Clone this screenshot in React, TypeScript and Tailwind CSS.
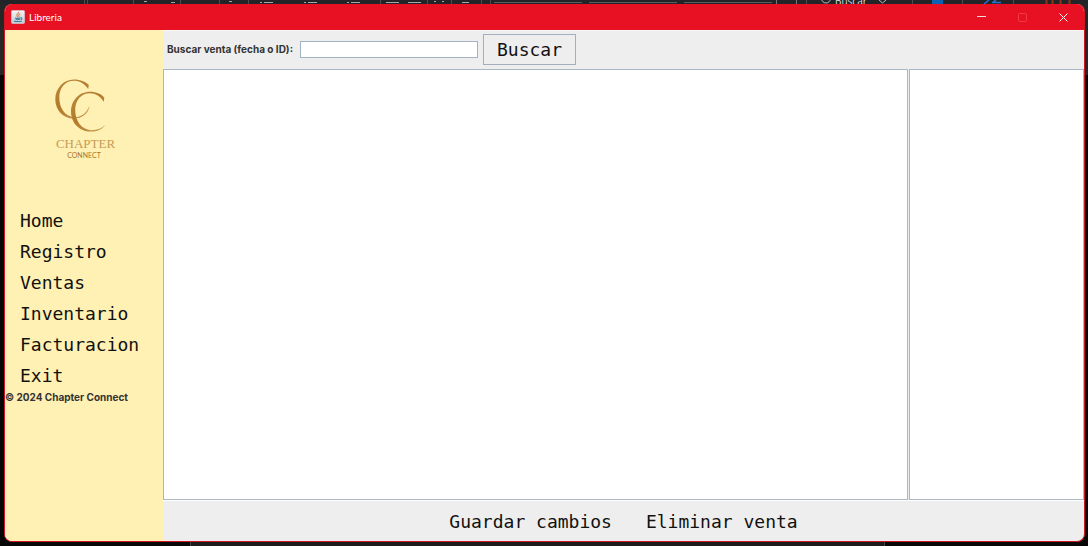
import React from "react";

const links = ["Home", "Registro", "Ventas", "Inventario", "Facturacion", "Exit"];
const mono = "font-['DejaVu_Sans_Mono',monospace] text-[18px] leading-[31px] text-[#111]";

function JavaIcon() {
  return (
    <svg viewBox="0 0 14 14" className="h-[14px] w-[14px]" aria-hidden="true">
      <defs>
        <linearGradient id="tile" x1="0" y1="0" x2="0" y2="1">
          <stop offset="0" stopColor="#f4f5f6" />
          <stop offset="1" stopColor="#b9cbd4" />
        </linearGradient>
      </defs>
      <rect x=".5" y=".5" width="13" height="13" rx="1" fill="url(#tile)" stroke="#d3c9cc" strokeWidth=".7" />
      <path d="M7.6 1.8C8.2 3.300 5.200 4 5.800 5.600c.3.7.9 1 .9 1.600M9.400 3.800c-1.800.7-2.200 1.500-1.400 2.300.4.5.1.9-.4 1.200" fill="none" stroke="#d98a61" strokeWidth="1.2" />
      <path d="M4 7.900c1 .6 4.200.6 5.600 0M4.600 9.300c1 .4 3.200.4 4.300 0M3 10.900c1.800.8 6 .8 7.800 0M9.700 7.800c1.800-.2 1.500 1.400 0 1.800" fill="none" stroke="#44799a" strokeWidth="1.1" />
    </svg>
  );
}

function Logo() {
  return (
    <svg viewBox="0 0 60 80" className="h-[80px] w-[60px] overflow-visible" role="img" aria-label="Chapter Connect">
      <defs>
        <linearGradient id="gold" x1="0" y1="0" x2="1" y2="1">
          <stop offset="0" stopColor="#b98a3c" />
          <stop offset=".45" stopColor="#b37a2b" />
          <stop offset="1" stopColor="#c9a05a" />
        </linearGradient>
      </defs>
      <path d="M34.200 10C30 4.200 25.500 1.800 20 1.800C10.500 1.800 5.300 9.500 5.300 18.500C5.300 29 11 37.400 20 38.200C27.500 38.600 33 33.500 35.500 26.500C34.800 34.500 28 39.600 19.800 39.600C9 39.600 1.300 31 1.300 20.300C1.300 9 9.500 .4 20 .4C26 .4 32.500 3 34.800 6Z" fill="url(#gold)" />
      <path d="M49.700 23C46 17 41.500 14.300 36 14.300C26.500 14.300 21.200 22 21.200 31C21.200 42 27.500 50.500 37 51.200C43 51.400 48 49.300 51.200 45.500C48.500 50.500 43 52.600 36.500 52.600C25.500 52.600 17 44 17 32.800C17 21.500 25.200 12.800 36 12.800C42 12.800 48 15.300 50.300 18.800Z" fill="url(#gold)" />
      <text x="31.5" y="69" textAnchor="middle" fontSize="13" fill="#c79b58" className="font-['Liberation_Serif',serif]">CHAPTER</text>
      <text x="30" y="79" textAnchor="middle" fontSize="7" fill="#a9752c" className="font-[Lato,sans-serif]">CONNECT</text>
    </svg>
  );
}

function BackgroundToolbar() {
  return (
    <div className="h-1 shrink-0 overflow-hidden bg-[#222427]">
      <svg viewBox="0 0 1088 4" className="h-1 w-[1088px]" fill="none" aria-hidden="true">
        <path d="M84.500 0v4M87.500 0v4M133.500 0v4M180.500 0v4M219.500 0v4M248.500 0v4M380.500 0v4M427.500 0v4M451.500 0v4M481.500 0v4M490.500 0v4M806.500 0v4M912.500 0v4M962.500 0v4M1013.500 0v4" stroke="#4a4c4e" />
        <path d="M494 2.500h88M589 2.500h88M684 2.500h88" stroke="#5c5e60" />
        <path d="M260 2.500h2m2 0h9M304 2.500h2m2 0h9M347 2.500h2m2 0h9M386 2.500h13M408 2.500h13M462 2.500h7M144 1.500h3M171 2.500h4M229 1.500h3M434 1.500h2M442 1.500h2" stroke="#a4a6a8" />
        <path d="M776.500 0v4M796.500 0v4" stroke="#777" />
        <circle cx="826" cy="-1.500" r="4.500" stroke="#bbb" />
        <path d="M879 0l3.500 3 3.500-3" stroke="#bbb" />
        <path d="M932 0h11v4h-11z" fill="#0863b5" />
        <path d="M984 4l5-4M992 2.500h9M996 0l-4 3" stroke="#2272cf" strokeWidth="1.500" />
        <path d="M1046.500 0v4M1052.500 0v4M1060.500 0v4M1069.500 0v4" stroke="#8e3517" strokeWidth="2" />
        <text x="835" y="5" fontSize="10" fill="#ddd" className="font-['Open_Sans',sans-serif]">Buscar</text>
      </svg>
    </div>
  );
}

export default function App() {
  return (
    <div className="flex h-screen flex-col bg-[linear-gradient(#262626_75px,#070707_75px)] font-['Liberation_Sans',sans-serif]">
      <BackgroundToolbar />
      <main className="mr-[3px] ml-1 flex min-h-0 flex-1 flex-col overflow-hidden rounded-lg border border-t-0 border-[#d01525] bg-[#eee]">
        <header className="flex h-[26px] shrink-0 items-center bg-[#e81123] pl-[6px] text-white">
          <JavaIcon />
          <h1 className="ml-1 flex-1 font-[Lato,sans-serif] text-[10px]">Libreria</h1>
          <div className="flex h-full">
            <button aria-label="Minimizar" className="flex w-[41px] items-center justify-center">
              <svg viewBox="0 0 9 9" className="h-[9px] w-[9px]" stroke="#ffd9dc"><path d="M0 3.500h9" /></svg>
            </button>
            <button aria-label="Maximizar" disabled className="flex w-[41px] items-center justify-center">
              <svg viewBox="0 0 9 9" className="h-[9px] w-[9px]" fill="none" stroke="#f23a48"><rect x=".5" y=".5" width="8" height="8" rx="1" /></svg>
            </button>
            <button aria-label="Cerrar" className="flex w-[41px] items-center justify-center">
              <svg viewBox="0 0 9 9" className="h-[9px] w-[9px]" stroke="#fff"><path d="m.5.500 8 8m0-8-8 8" /></svg>
            </button>
          </div>
        </header>
        <div className="flex min-h-0 flex-1">
          <aside className="flex w-[158px] shrink-0 flex-col bg-[#fff0b3]">
            <div className="flex h-[175px] shrink-0 justify-center pt-[49px]">
              <Logo />
            </div>
            <nav className="flex flex-col items-start pl-[15px]">
              {links.map((label) => (
                <button key={label} className={mono}>{label}</button>
              ))}
            </nav>
            <p className="font-[Inter,sans-serif] text-[10px] leading-[12px] font-bold whitespace-nowrap text-[#333]">© 2024 Chapter Connect</p>
          </aside>
          <section className="flex min-w-0 flex-1 flex-col">
            <form className="flex h-[39px] shrink-0 items-center border-t border-[#f7f7f7] pb-0.5 pl-1" onSubmit={(e) => e.preventDefault()}>
              <label htmlFor="query" className="font-[Inter,sans-serif] text-[10px] font-bold whitespace-nowrap text-[#333]">Buscar venta (fecha o ID):</label>
              <input id="query" className="ml-[7px] h-[17px] w-[178px] border border-[#a3b3c3] bg-white px-1 text-[11px]" />
              <button className="ml-[5px] flex h-[31px] items-center border border-[#a3afbf] px-[13px] font-['DejaVu_Sans_Mono',monospace] text-[18px] text-[#111]">Buscar</button>
            </form>
            <div className="flex min-h-0 flex-1 gap-px">
              <div className="flex-1 border border-[#a9b7c5] bg-white" />
              <div className="w-[175px] border border-[#a9b7c5] bg-white" />
            </div>
            <footer className="flex h-[41px] shrink-0 items-center justify-center gap-[34px] border-t border-white">
              <button className={mono}>Guardar cambios</button>
              <button className={mono}>Eliminar venta</button>
            </footer>
          </section>
        </div>
      </main>
      <div className="flex h-1 shrink-0">
        <div className="w-[190px]" />
        <div className="flex-1 border-x border-[#444] bg-[#1c1c1c]" />
        <div className="w-[203px]" />
      </div>
    </div>
  );
}
